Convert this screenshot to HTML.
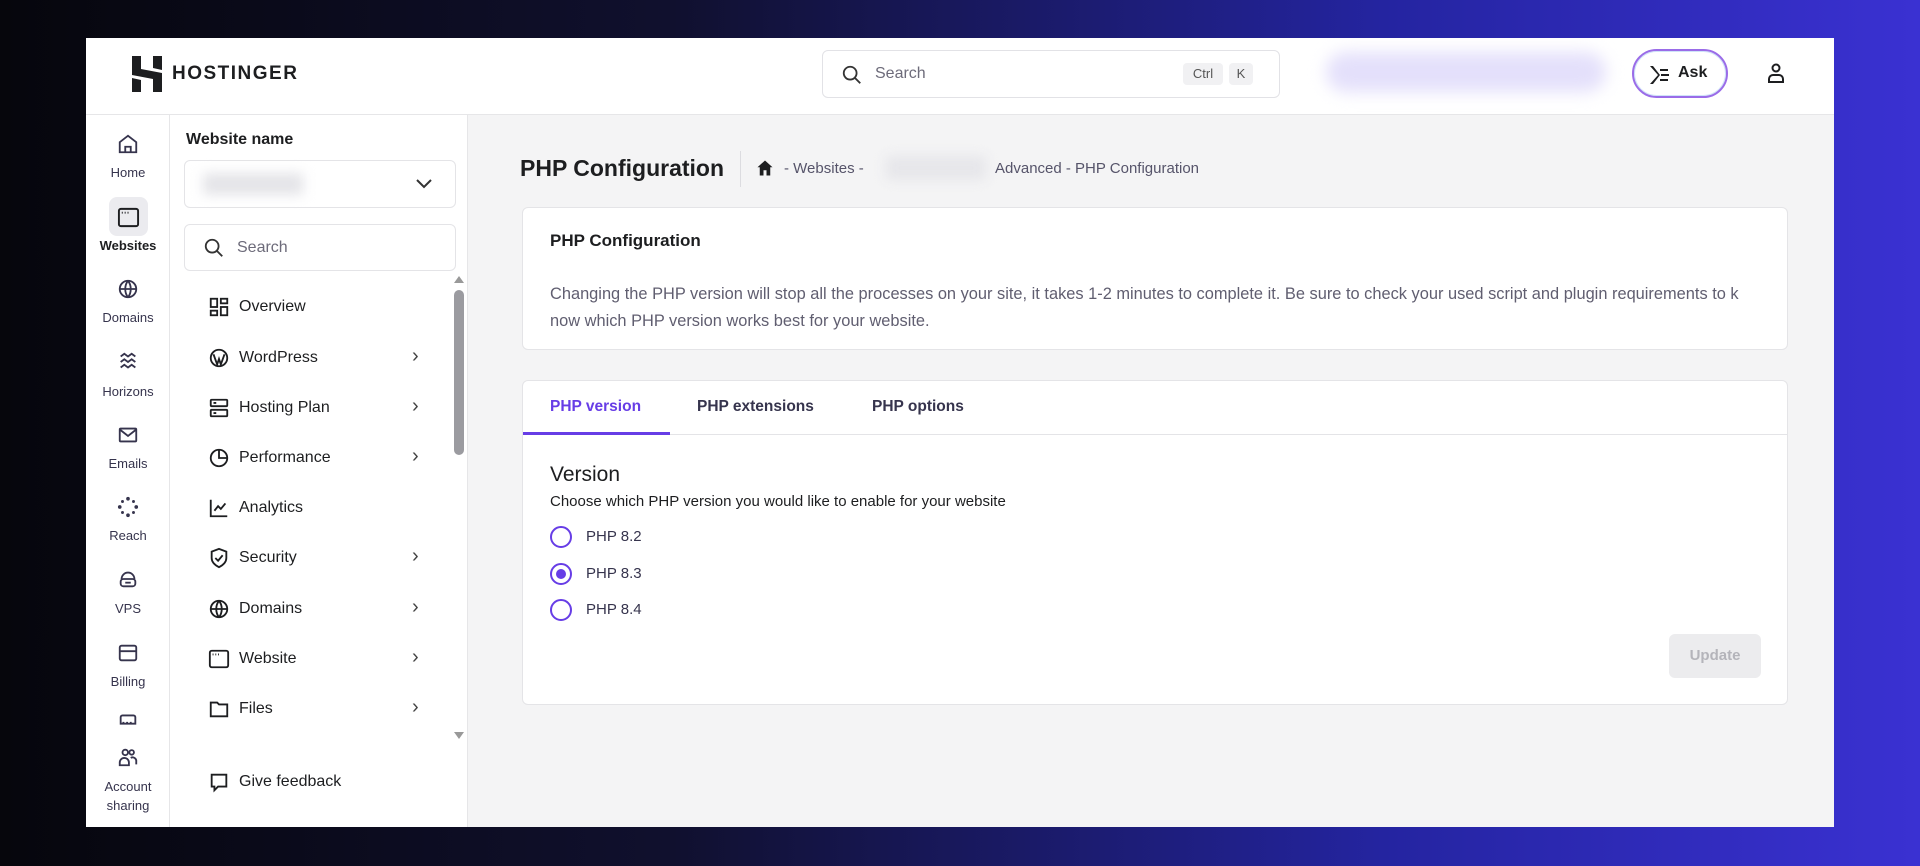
<!DOCTYPE html>
<html><head><meta charset="utf-8"><style>
*{margin:0;padding:0;box-sizing:border-box}
body{width:1920px;height:866px;overflow:hidden;font-family:"Liberation Sans",sans-serif;color:#1d1e20;background:linear-gradient(90deg,#06060c 0%,#10102e 35%,#2424a0 72%,#3a31d2 100%);position:relative}
.a{position:absolute}
.frame{left:86px;top:38px;width:1748px;height:789px;background:#f4f4f5;overflow:hidden}
.hdr{left:0;top:0;width:1748px;height:77px;background:#fff;border-bottom:1px solid #e6e6e8}
.rail{left:0;top:77px;width:84px;height:712px;background:#fff;border-right:1px solid #e6e6e8}
.side{left:84px;top:77px;width:298px;height:712px;background:#fff;border-right:1px solid #e6e6e8}
.rl{left:0;width:84px;text-align:center;font-size:13px;color:#36344d}
.rail svg{position:absolute;left:31px}
.nav{left:0;width:280px;height:40px;font-size:16px;color:#1d1e20}
.nav svg{position:absolute;left:38px;top:9px}
.nav span{position:absolute;left:69px;top:11px}
.nav i{position:absolute;left:242px;top:7px;font-style:normal;color:#444;font-size:20px}
.card{background:#fff;border:1px solid #e4e4e7;border-radius:6px}
.radio{width:22px;height:22px;border:2px solid #673de6;border-radius:50%}
</style></head><body>
<div class="a frame">
 <div class="a hdr">
  <svg class="a" style="left:46px;top:18px" width="30" height="36" viewBox="0 0 30 36"><path d="M0 0h9v13l21 4V36h-9V23L0 19z M0 22l9 2v12H0z M21 0h9v14l-9-2z" fill="#1d1e20"/></svg>
  <div class="a" style="left:86px;top:25px;font-size:19px;font-weight:bold;letter-spacing:1.5px">HOSTINGER</div>
  <div class="a" style="left:736px;top:12px;width:458px;height:48px;border:1px solid #e2e2e6;border-radius:6px">
   <svg class="a" style="left:18px;top:13px" width="22" height="22" viewBox="0 0 24 24" fill="none" stroke="#333" stroke-width="2"><circle cx="10" cy="10" r="7"/><path d="M15 15l6 6"/></svg>
   <div class="a" style="left:52px;top:14px;font-size:16px;color:#6d6b7a">Search</div>
   <div class="a" style="left:360px;top:12px;width:40px;height:22px;background:#f1f1f3;border-radius:4px;font-size:13px;text-align:center;line-height:22px;color:#555">Ctrl</div>
   <div class="a" style="left:406px;top:12px;width:24px;height:22px;background:#f1f1f3;border-radius:4px;font-size:13px;text-align:center;line-height:22px;color:#555">K</div>
  </div>
  <div class="a" style="left:1240px;top:14px;width:280px;height:40px;border-radius:20px;background:#e4e0fb;filter:blur(8px)"></div>
  <div class="a" style="left:1546px;top:11px;width:96px;height:49px;border-radius:25px;border:2px solid #9a6ce8;background:#fff;box-shadow:inset 0 0 0 1px #cfe3f8">
   <svg class="a" style="left:14px;top:13px" width="22" height="22" viewBox="0 0 22 22" fill="#1d1e20"><path d="M2 2l8 9-8 9 3 0 7-9-7-9z M12 5h8v2h-8z M13 10h8v2h-8z M12 15h8v2h-8z"/></svg>
   <div class="a" style="left:44px;top:13px;font-size:16px;font-weight:bold">Ask</div>
  </div>
  <svg class="a" style="left:1680px;top:24px" width="20" height="22" viewBox="0 0 20 22" fill="none" stroke="#1d1e20" stroke-width="2"><circle cx="10" cy="6" r="3.5"/><path d="M3 20v-3a4 4 0 0 1 4-4h6a4 4 0 0 1 4 4v3z"/></svg>
 </div>
 <div class="a rail">
  <svg style="top:18px" width="22" height="22" viewBox="0 0 24 24" fill="none" stroke="#36344d" stroke-width="2"><path d="M3 10l9-7 9 7v11H3z M9 21v-6h6v6"/></svg>
  <div class="a rl" style="top:50px">Home</div>
  <div class="a" style="left:23px;top:82px;width:39px;height:39px;background:#ebebef;border-radius:8px"></div>
  <svg style="top:91px;left:31px" width="23" height="23" viewBox="0 0 24 24" fill="none" stroke="#1d1e20" stroke-width="2"><rect x="2" y="3" width="20" height="18" rx="2"/><path d="M5 7h1M8 7h1M11 7h1"/></svg>
  <div class="a rl" style="top:123px;font-weight:bold;color:#1d1e20">Websites</div>
  <svg style="top:163px" width="22" height="22" viewBox="0 0 24 24" fill="none" stroke="#36344d" stroke-width="2"><circle cx="12" cy="12" r="9"/><path d="M3 12h18M12 3c-4 5-4 13 0 18M12 3c4 5 4 13 0 18"/></svg>
  <div class="a rl" style="top:195px">Domains</div>
  <svg style="top:236px" width="22" height="22" viewBox="0 0 24 24" fill="none" stroke="#36344d" stroke-width="2"><path d="M4 6l4-3 4 3 4-3 4 3M4 12l4-3 4 3 4-3 4 3M4 18l4-3 4 3 4-3 4 3"/></svg>
  <div class="a rl" style="top:269px">Horizons</div>
  <svg style="top:309px" width="22" height="22" viewBox="0 0 24 24" fill="none" stroke="#36344d" stroke-width="2"><rect x="3" y="5" width="18" height="14" rx="1"/><path d="M3 6l9 7 9-7"/></svg>
  <div class="a rl" style="top:341px">Emails</div>
  <svg style="top:381px" width="22" height="22" viewBox="0 0 24 24" fill="#36344d"><circle cx="12" cy="3" r="2"/><circle cx="12" cy="21" r="2"/><circle cx="3" cy="12" r="2"/><circle cx="21" cy="12" r="2"/><circle cx="6" cy="6" r="1.6"/><circle cx="18" cy="18" r="1.6"/><circle cx="18" cy="6" r="1.6"/><circle cx="6" cy="18" r="1.6"/></svg>
  <div class="a rl" style="top:413px">Reach</div>
  <svg style="top:453px" width="22" height="22" viewBox="0 0 24 24" fill="none" stroke="#36344d" stroke-width="2"><path d="M5 12a7 7 0 0 1 14 0"/><rect x="4" y="12" width="16" height="8" rx="3"/><path d="M9 16h6"/></svg>
  <div class="a rl" style="top:486px">VPS</div>
  <svg style="top:527px" width="22" height="22" viewBox="0 0 24 24" fill="none" stroke="#36344d" stroke-width="2"><rect x="3" y="4" width="18" height="16" rx="2"/><path d="M3 10h18"/></svg>
  <div class="a rl" style="top:559px">Billing</div>
  <svg style="top:594px" width="22" height="22" viewBox="0 0 24 24" fill="none" stroke="#36344d" stroke-width="2"><path d="M4 16V9a2 2 0 0 1 2-2h12a2 2 0 0 1 2 2v7H4z M7 16v-2M11 16v-2M15 16v-2"/></svg>
  <svg style="top:631px" width="22" height="22" viewBox="0 0 24 24" fill="none" stroke="#36344d" stroke-width="2"><circle cx="9" cy="7" r="3"/><circle cx="16" cy="7" r="2.5"/><path d="M3 21v-3a5 5 0 0 1 10 0v3zM15 13a4 4 0 0 1 6 4v3"/></svg>
  <div class="a rl" style="top:662px;line-height:19px">Account<br>sharing</div>
 </div>
 <div class="a side">
  <div class="a" style="left:16px;top:16px;font-size:16px;font-weight:bold">Website name</div>
  <div class="a" style="left:14px;top:45px;width:272px;height:48px;border:1px solid #e4e4e7;border-radius:6px">
   <div class="a" style="left:18px;top:12px;width:100px;height:22px;background:#e4e4e8;filter:blur(6px)"></div>
   <svg class="a" style="left:230px;top:16px" width="18" height="14" viewBox="0 0 18 14" fill="none" stroke="#333" stroke-width="2"><path d="M2 3l7 7 7-7"/></svg>
  </div>
  <div class="a" style="left:14px;top:109px;width:272px;height:47px;border:1px solid #e4e4e7;border-radius:6px">
   <svg class="a" style="left:18px;top:12px" width="22" height="22" viewBox="0 0 24 24" fill="none" stroke="#333" stroke-width="2"><circle cx="10" cy="10" r="7"/><path d="M15 15l6 6"/></svg>
   <div class="a" style="left:52px;top:14px;font-size:16px;color:#6d6b7a">Search</div>
  </div>
  <div class="a" style="left:284px;top:161px;width:0;height:0;border:5px solid transparent;border-bottom:7px solid #999;border-top:0"></div>
  <div class="a" style="left:284px;top:175px;width:10px;height:165px;background:#9b9ba0;border-radius:5px"></div>
  <div class="a" style="left:284px;top:617px;width:0;height:0;border:5px solid transparent;border-top:7px solid #999;border-bottom:0"></div>

  <div class="a nav" style="top:172px"><svg width="22" height="22" viewBox="0 0 24 24" fill="none" stroke="#1d1e20" stroke-width="2"><rect x="3" y="3" width="7" height="9"/><rect x="14" y="3" width="7" height="5"/><rect x="3" y="16" width="7" height="5"/><rect x="14" y="12" width="7" height="9"/></svg><span>Overview</span></div>
  <div class="a nav" style="top:223px"><svg width="22" height="22" viewBox="0 0 24 24" fill="none" stroke="#1d1e20" stroke-width="2"><circle cx="12" cy="12" r="9"/><path d="M6 8l4 11 2-6 2 6 4-11"/></svg><span>WordPress</span><i>›</i></div>
  <div class="a nav" style="top:273px"><svg width="22" height="22" viewBox="0 0 24 24" fill="none" stroke="#1d1e20" stroke-width="2"><rect x="3" y="3" width="18" height="7" rx="1"/><rect x="3" y="14" width="18" height="7" rx="1"/><path d="M6 17.5h3M6 6.5h3"/></svg><span>Hosting Plan</span><i>›</i></div>
  <div class="a nav" style="top:323px"><svg width="22" height="22" viewBox="0 0 24 24" fill="none" stroke="#1d1e20" stroke-width="2"><circle cx="12" cy="12" r="9"/><path d="M12 3v9h9"/></svg><span>Performance</span><i>›</i></div>
  <div class="a nav" style="top:373px"><svg width="22" height="22" viewBox="0 0 24 24" fill="none" stroke="#1d1e20" stroke-width="2"><path d="M3 3v18h18M7 15l4-5 3 3 5-6"/></svg><span>Analytics</span></div>
  <div class="a nav" style="top:423px"><svg width="22" height="22" viewBox="0 0 24 24" fill="none" stroke="#1d1e20" stroke-width="2"><path d="M12 2l8 3v7c0 5-4 8-8 10-4-2-8-5-8-10V5z M8 12l3 3 5-6"/></svg><span>Security</span><i>›</i></div>
  <div class="a nav" style="top:474px"><svg width="22" height="22" viewBox="0 0 24 24" fill="none" stroke="#1d1e20" stroke-width="2"><circle cx="12" cy="12" r="9"/><path d="M3 12h18M12 3c-4 5-4 13 0 18M12 3c4 5 4 13 0 18"/></svg><span>Domains</span><i>›</i></div>
  <div class="a nav" style="top:524px"><svg width="22" height="22" viewBox="0 0 24 24" fill="none" stroke="#1d1e20" stroke-width="2"><rect x="2" y="3" width="20" height="18" rx="2"/><path d="M5 7h1M8 7h1M11 7h1"/></svg><span>Website</span><i>›</i></div>
  <div class="a nav" style="top:574px"><svg width="22" height="22" viewBox="0 0 24 24" fill="none" stroke="#1d1e20" stroke-width="2"><path d="M3 5h7l2 2h9v13H3z"/></svg><span>Files</span><i>›</i></div>
  <div class="a nav" style="top:647px"><svg width="22" height="22" viewBox="0 0 24 24" fill="none" stroke="#1d1e20" stroke-width="2"><path d="M4 4h16v13H11l-4 4v-4H4z"/></svg><span>Give feedback</span></div>
 </div>

 <div class="a" style="left:434px;top:117px;font-size:23px;font-weight:bold">PHP Configuration</div>
 <div class="a" style="left:654px;top:113px;width:1px;height:36px;background:#dcdce0"></div>
 <svg class="a" style="left:670px;top:121px" width="18" height="18" viewBox="0 0 24 24" fill="#1d1e20"><path d="M12 2l10 9h-3v11h-5v-7h-4v7H5V11H2z"/></svg>
 <div class="a" style="left:698px;top:122px;font-size:15px;color:#56546a">- Websites -</div>
 <div class="a" style="left:800px;top:118px;width:100px;height:24px;background:#e6e6ea;filter:blur(6px)"></div>
 <div class="a" style="left:909px;top:122px;font-size:15px;color:#56546a">Advanced - PHP Configuration</div>

 <div class="a card" style="left:436px;top:169px;width:1266px;height:143px">
  <div class="a" style="left:27px;top:23px;font-size:17px;font-weight:bold">PHP Configuration</div>
  <div class="a" style="left:27px;top:73px;font-size:16.4px;line-height:27px;color:#605e70;white-space:nowrap">Changing the PHP version will stop all the processes on your site, it takes 1-2 minutes to complete it. Be sure to check your used script and plugin requirements to k<br>now which PHP version works best for your website.</div>
 </div>

 <div class="a card" style="left:436px;top:342px;width:1266px;height:325px">
  <div class="a" style="left:0;top:53px;width:1264px;height:1px;background:#e4e4e7"></div>
  <div class="a" style="left:0;top:51px;width:147px;height:3px;background:#673de6"></div>
  <div class="a" style="left:27px;top:17px;font-size:15.5px;font-weight:bold;color:#673de6">PHP version</div>
  <div class="a" style="left:174px;top:17px;font-size:15.5px;font-weight:bold;color:#36344d">PHP extensions</div>
  <div class="a" style="left:349px;top:17px;font-size:15.5px;font-weight:bold;color:#36344d">PHP options</div>
  <div class="a" style="left:27px;top:82px;font-size:21px">Version</div>
  <div class="a" style="left:27px;top:112px;font-size:15px;color:#1d1e20">Choose which PHP version you would like to enable for your website</div>
  <div class="a radio" style="left:27px;top:145px"></div>
  <div class="a" style="left:63px;top:147px;font-size:15px;color:#36344d">PHP 8.2</div>
  <div class="a radio" style="left:27px;top:182px"><div class="a" style="left:4px;top:4px;width:10px;height:10px;border-radius:50%;background:#673de6"></div></div>
  <div class="a" style="left:63px;top:184px;font-size:15px;color:#36344d">PHP 8.3</div>
  <div class="a radio" style="left:27px;top:218px"></div>
  <div class="a" style="left:63px;top:220px;font-size:15px;color:#36344d">PHP 8.4</div>
  <div class="a" style="left:1146px;top:253px;width:92px;height:44px;background:#ececee;border-radius:6px;font-size:15px;font-weight:bold;color:#b4b4ba;text-align:center;line-height:44px">Update</div>
 </div>
</div>
</body></html>
